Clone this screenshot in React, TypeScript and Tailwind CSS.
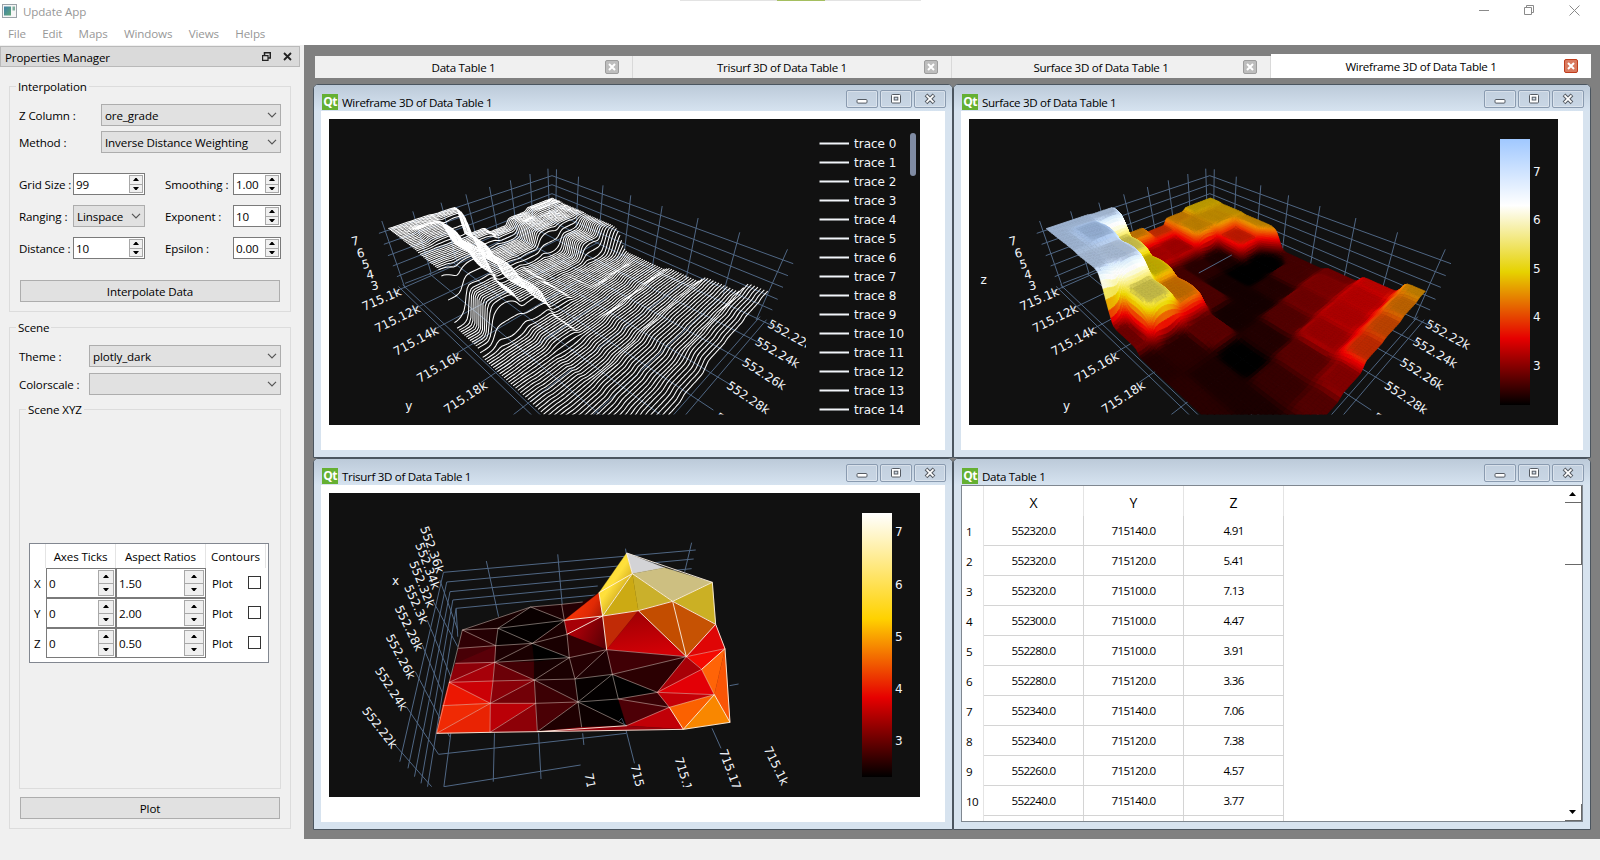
import React from "react";

type Pt = [number, number];

/* ---------- terrain model shared by the surface and wireframe plots ---------- */

// Node values on an 8 x 8 lattice; 0 marks a node without a sample.
const GRID_Z: number[][] = [
  [4.8, 4.7, 4.6, 0, 2.7, 3.0, 3.6, 4.55],
  [4.8, 4.65, 3.77, 2.2, 2.7, 3.1, 3.5, 4.35],
  [4.5, 4.57, 2.4, 2.2, 2.45, 3.0, 3.45, 4.1],
  [3.91, 3.36, 2.5, 2.35, 2.35, 2.8, 3.3, 3.9],
  [4.47, 3.4, 2.7, 2.75, 2.35, 2.45, 2.85, 3.15],
  [7.13, 5.41, 4.91, 4.4, 2.85, 2.2, 2.6, 2.8],
  [7.2, 7.38, 7.06, 5.4, 2.5, 2.4, 2.4, 2.5],
  [7.2, 7.2, 7.1, 3.0, 2.45, 2.5, 2.5, 2.5],
];

function height(x: number, y: number): number {
  let sw = 0;
  let sz = 0;
  for (let i = 0; i < 8; i++) {
    if (Math.abs(x - i) > 2.2) continue;
    for (let j = 0; j < 8; j++) {
      if (!GRID_Z[i][j]) continue;
      const d2 = (x - i) * (x - i) + (y - j) * (y - j) + 0.001;
      const w = Math.pow(d2, -4);
      sw += w;
      sz += w * GRID_Z[i][j];
    }
  }
  return sz / sw;
}

function project(x: number, y: number, z: number): Pt {
  const pz = 0.088 * (z - 7);
  const w = 1 - 0.0366 * x - 0.0491 * y - 0.171 * pz;
  return [
    259.6 + (-18.8 + 22.17 * y - 16.63 * x) / w,
    159 - (102 - 9.6 * x - 12.8 * y + 100 * pz) / w,
  ];
}

const fmt = (p: Pt) => `${p[0].toFixed(1)} ${p[1].toFixed(1)}`;

const STOPS: [number, number[]][] = [
  [0, [0, 0, 0]],
  [0.25, [230, 0, 0]],
  [0.5, [230, 210, 0]],
  [0.75, [255, 255, 255]],
  [1, [160, 200, 255]],
];

function colorFor(z: number, shade: number): string {
  const t = Math.min(1, Math.max(0, (z - 2.2) / 5.47));
  let k = 0;
  while (k < 3 && t > STOPS[k + 1][0]) k++;
  const f = (t - STOPS[k][0]) / 0.25;
  const c = STOPS[k][1].map((v, i) =>
    Math.min(255, Math.round((v + (STOPS[k + 1][1][i] - v) * f) * shade)),
  );
  return `rgb(${c[0]},${c[1]},${c[2]})`;
}

const N = 70;
const surfaceCells = (() => {
  const out: { d: string; c: string }[] = [];
  const patch = (x: number, y: number, s: number, depth: number) => {
    const a = height(x, y);
    const b = height(x + s, y);
    const c = height(x + s, y + s);
    const d = height(x, y + s);
    const range = Math.max(a, b, c, d) - Math.min(a, b, c, d);
    if (depth < 2 && range > 0.22) {
      const q = s / 2;
      patch(x, y, q, depth + 1);
      patch(x + q, y, q, depth + 1);
      patch(x, y + q, q, depth + 1);
      patch(x + q, y + q, q, depth + 1);
      return;
    }
    const p = [project(x, y, a), project(x + s, y, b), project(x + s, y + s, c), project(x, y + s, d)];
    if (Math.min(p[0][1], p[2][1]) > 300) return;
    const gx = (b - a + c - d) / (2 * s);
    const gy = (d - a + c - b) / (2 * s);
    const slope = Math.hypot(gx, gy);
    out.push({
      d: `M${p.map(fmt).join("L")}Z`,
      c: colorFor((a + b + c + d) / 4, 0.81 + 0.23 * Math.min(1, slope / 2.5)),
    });
  };
  const s = 7 / N;
  for (let i = 0; i < N; i++) {
    for (let j = 0; j < N; j++) patch(i * s, j * s, s, 0);
  }
  return out;
})();

const wirePath = (() => {
  let d = "";
  for (let j = 0; j < 99; j++) {
    const y = (j * 7) / 98;
    for (let i = 0; i <= 98; i++) {
      const x = 7 - (i * 7) / 98;
      d += (i ? "L" : "M") + fmt(project(x, y, height(x, y)));
    }
  }
  return d;
})();

const floorPath = (() => {
  let d = "";
  for (let k = 0; k < 8; k++) {
    d += `M${fmt(project(7.45, k, 2.2))}L${fmt(project(-0.15, k, 2.2))}`;
    d += `M${fmt(project(k, 7.45, 2.2))}L${fmt(project(k, -0.15, 2.2))}`;
  }
  d += `M${fmt(project(7.15, -0.15, 2.2))}L${fmt(project(7.15, 7.2, 2.2))}`;
  d += `M${fmt(project(-0.15, 7.15, 2.2))}L${fmt(project(7.2, 7.15, 2.2))}`;
  return d;
})();

const WALLS =
  "M188 370L612 197L1203 461M200 403L612 224L1190 497M210 437L612 251L1178 532M222 468L612 279L1165 568M232 500L612 305L1152 600" +
  "M195 333L252 535M271 304L316 490M340 278L380 460M401 253L434 420M459 231L483 395M510 211L527 375M558 192L566 350M602 176L606 325" +
  "M623 178L621 330M677 200L671 355M737 226L727 380M805 256L790 420M882 288L858 470M970 324L940 510M1072 367L1032 550M1189 418L1112 630" +
  "M252 520L316 490L612 320";

interface Lbl {
  t: string;
  x: number;
  y: number;
  r: number;
}

function Labels({ items }: { items: Lbl[] }) {
  return (
    <g fill="#f2f5fa" fontFamily='"DejaVu Sans", sans-serif' fontSize="12">
      {items.map((l, i) => (
        <text key={i} transform={`translate(${l.x} ${l.y}) rotate(${l.r})`}>
          {l.t}
        </text>
      ))}
    </g>
  );
}

const SCENE_LABELS: Lbl[] = [
  { t: "7", x: 41, y: 127, r: -12 },
  { t: "6", x: 46.5, y: 139, r: -12 },
  { t: "5", x: 51.5, y: 150, r: -12 },
  { t: "4", x: 56, y: 160.5, r: -12 },
  { t: "3", x: 60.5, y: 171.5, r: -12 },
  { t: "715.1k", x: 53, y: 192, r: -23 },
  { t: "715.12k", x: 66, y: 214, r: -26 },
  { t: "715.14k", x: 85, y: 237, r: -28 },
  { t: "715.16k", x: 108.5, y: 264, r: -30 },
  { t: "715.18k", x: 136, y: 295, r: -33 },
  { t: "y", x: 94, y: 291, r: 0 },
  { t: "552.22k", x: 455.5, y: 207.5, r: 29 },
  { t: "552.24k", x: 443, y: 225, r: 30 },
  { t: "552.26k", x: 430, y: 245.5, r: 32 },
  { t: "552.28k", x: 414.5, y: 268.5, r: 34 },
  { t: "5", x: 403, y: 300, r: 34 },
];

function WireframePlot() {
  return (
    <svg width="591" height="306" viewBox="0 0 591 306" className="block bg-[#111]">
      <defs>
        <clipPath id="wf">
          <rect x="0" y="0" width="477" height="295.5" />
        </clipPath>
      </defs>
      <g clipPath="url(#wf)">
        <g transform="translate(-17.8 0)">
          <g fill="none" stroke="#506784" strokeWidth="1">
            <path d={floorPath} />
            <path d={WALLS} transform="translate(-9 -9) scale(.40816 .33333)" vectorEffect="non-scaling-stroke" />
          </g>
          <path d={wirePath} fill="none" stroke="#ffffff" strokeWidth="1.05" strokeLinejoin="round" />
          <Labels items={SCENE_LABELS} />
        </g>
      </g>
      <g fill="#f2f5fa" fontFamily='"DejaVu Sans", sans-serif' fontSize="12">
        {Array.from({ length: 15 }, (_, i) => (
          <g key={i}>
            <rect x="490.5" y={23.5 + i * 19} width="29.5" height="2" />
            <text x="525" y={28.8 + i * 19}>
              trace {i}
            </text>
          </g>
        ))}
      </g>
      <rect x="581" y="14" width="6" height="43" rx="3" fill="#7f8ba3" />
    </svg>
  );
}

function ColorTicks({ x, ys }: { x: number; ys: number[] }) {
  return (
    <g fill="#f2f5fa" fontFamily='"DejaVu Sans", sans-serif' fontSize="12">
      {ys.map((y, i) => (
        <text key={i} x={x} y={y + 4.4}>
          {7 - i}
        </text>
      ))}
    </g>
  );
}

function SurfacePlot() {
  return (
    <svg width="589" height="306" viewBox="0 0 589 306" className="block bg-[#111]">
      <defs>
        <clipPath id="sf">
          <rect x="0" y="0" width="509" height="295.5" />
        </clipPath>
        <linearGradient id="bb" x1="0" y1="1" x2="0" y2="0">
          <stop offset="0" stopColor="#000" />
          <stop offset=".25" stopColor="#e60000" />
          <stop offset=".5" stopColor="#e6d200" />
          <stop offset=".75" stopColor="#fff" />
          <stop offset="1" stopColor="#a0c8ff" />
        </linearGradient>
      </defs>
      <g clipPath="url(#sf)">
        <g fill="none" stroke="#506784" strokeWidth="1">
          <path d={floorPath} />
          <path d={WALLS} transform="translate(-9 -9) scale(.40816 .33333)" vectorEffect="non-scaling-stroke" />
        </g>
        <g strokeWidth="0.7">
          {surfaceCells.map((c, i) => (
            <path key={i} d={c.d} fill={c.c} stroke={c.c} />
          ))}
        </g>
        <path d="M229.8 154L262.8 136" stroke="#506784" strokeWidth="1" />
        <Labels items={SCENE_LABELS} />
        <Labels items={[{ t: "z", x: 11.5, y: 164.5, r: 0 }]} />
      </g>
      <rect x="531" y="20" width="30" height="266" fill="url(#bb)" />
      <ColorTicks x={564} ys={[52.7, 100.7, 150, 197.7, 247]} />
    </svg>
  );
}

/* ---------- triangulated surface ---------- */

const V: Record<string, Pt> = {
  A: [97, 255], B: [302, 186], B2: [395, 178], B3: [458, 171], C: [204, 250], D: [403, 226],
  E: [590, 24], E2: [704, 68], F: [607, 86], G: [847, 112], H: [728, 169], I: [857, 238],
  J: [518, 213], K: [507, 143], L: [625, 197], M: [530, 314], N: [769, 335], O: [885, 311],
  P: [815, 373], Q: [853, 449], R: [900, 532], S: [760, 553], T: [718, 487], U: [682, 442],
  V: [547, 388], W: [565, 462], X: [590, 542], Y: [444, 471], Z: [435, 402], a: [418, 338],
  b: [411, 268], c: [307, 295], c2: [313, 350], d: [197, 302], e: [85, 310], f: [76, 355],
  g: [194, 352], h: [313, 405], i: [189, 408], j: [57, 412], k: [181, 475], l: [38, 482],
  m: [20, 565], n: [180, 562], o: [317, 475], p: [322, 560], q: [455, 547],
};

const FACES: [string, string][] = [
  ["A B C", "#190001"], ["B D C", "#0a0000"], ["B B2 D", "#1c0002"], ["B2 B3 K D", "#260003"],
  ["A C d", "#240003"], ["A d e", "#300004"], ["C d c", "#080000"], ["C D c", "#030000"],
  ["d c g", "#1c0002"], ["e d f", "#480006"], ["d g f", "#5a0008"], ["D b c", "#1b0001"],
  ["b a c", "#190001"], ["g c c2", "#1a0001"], ["c a c2", "#000000"], ["g c2 h", "#420005"],
  ["c2 a h", "#170001"], ["f g j", "#8e0009"], ["g i j", "#a60009"], ["g i h", "#6b0007"],
  ["j i k", "#cb0006"], ["i h k", "#8a0008"], ["j k l", "#ec1702"], ["l k m", "#f02a04"],
  ["m k n", "#e92303"], ["k h o", "#720007"], ["k o n", "#ba0007"], ["o n p", "#8d0007"],
  ["h o Y", "#3c0004"], ["o Y p", "#4a0005"], ["h a Z", "#1a0001"], ["h Z Y", "#250003"],
  ["Y p q", "#1f0001"], ["a M Z", "#240002"], ["M V Z", "#1c0002"], ["Z V Y", "#060000"],
  ["V Y W", "#030000"], ["V U W", "#000000"], ["Y W X", "#000000"], ["Y X q", "#0d0000"],
  ["W U T", "#380004"], ["W T X", "#4d0006"], ["X T S", "#c10007"], ["p q X S", "#96000a"],
  ["b J M", "url(#t2)"], ["b M a", "#320003"], ["D J b", "#a70007"], ["D K J", "url(#t3)"],
  ["K E F J", "url(#t1)"], ["E E2 F", "#d3d3d6"], ["F E2 G H", "#cdbf81"], ["F H L", "#cab02b"],
  ["F L J", "#ccaa13"], ["H G I", "#cbb024"], ["J L M", "#c12b06"], ["L N M", "url(#t4)"],
  ["L H N", "#c34d00"], ["H N I", "#c65203"], ["M N V", "#400005"], ["N V U", "#2b0002"],
  ["N I O", "#df0606"], ["N O P", "#f40a02"], ["N P U", "#a80007"], ["P U Q", "#e30006"],
  ["U Q T", "#c50007"], ["P O Q", "#ff6407"], ["O R Q", "#fa5505"], ["T Q S", "#fb6100"],
  ["Q R S", "#f98700"],
];

const THIN =
  "A-d A-B C-B B-D A-C C-D C-d C-c c-D d-e d-c d-g g-f g-c a-c g-a g-h g-j j-i i-h g-i j-k i-k h-k k-l k-m k-n k-o o-n o-p h-o o-Y h-Y h-Z h-a a-Z a-M Z-M Z-V Z-Y Y-V Y-W Y-X Y-q Y-p V-U V-N V-M a-b D-b b-c W-V W-U W-T T-X T-U U-N U-P U-Q Q-T P-N N-O P-Q B-B2 B2-B3 B2-D M-N A-m".split(
    " ",
  );
const BOLD =
  "D-J b-J K-J J-F K-F E-F F-H H-G H-I E-G G-I I-O O-R I-N H-N J-M J-L L-H L-N R-S Q-S P-O Q-R S-T m-n n-p p-S p-X".split(" ");

const seg = (s: string) => {
  const [u, v] = s.split("-");
  return `M${V[u].join(" ")}L${V[v].join(" ")}`;
};

const TRI_GRID =
  "M327 367L945 300M335 396L940 327M343 425L935 356M350 450L705 408M358 475L700 435M432 333L462 500M607 313L618 465M773 296L776 320M935 278L918 365" +
  "M327 367L220 935M335 396L240 955M343 425L256 980M350 450L272 1000M358 475L288 1010M358 475L362 560" +
  "M315 913L775 850M328 1010L663 945M345 850L328 1010M452 850L449 995M560 850L566 987M668 850L671 885M773 835L795 940M985 835L1007 895M1028 707L1050 702" +
  "M205 880L298 1010M236 770L315 913M258 665L342 860M275 585L325 730M287 510L345 680M300 450L362 590M318 390L362 540";

const TRI_LABELS: Lbl[] = [
  { t: "552.36k", x: 91, y: 35, r: 70 },
  { t: "552.34k", x: 86, y: 51.5, r: 69 },
  { t: "552.32k", x: 80, y: 70, r: 68 },
  { t: "552.3k", x: 75, y: 94, r: 66 },
  { t: "552.28k", x: 65.5, y: 115, r: 64 },
  { t: "552.26k", x: 56.5, y: 144, r: 62 },
  { t: "552.24k", x: 45.5, y: 177.5, r: 57 },
  { t: "552.22k", x: 32.5, y: 218, r: 52 },
  { t: "x", x: 63, y: 91.5, r: 0 },
  { t: "71", x: 255.5, y: 281, r: 79 },
  { t: "715", x: 301.5, y: 272.5, r: 76 },
  { t: "715.1", x: 345.5, y: 265.5, r: 73 },
  { t: "715.17", x: 390, y: 258, r: 70 },
  { t: "715.1k", x: 434.5, y: 256, r: 64 },
];

function TrisurfPlot() {
  return (
    <svg width="591" height="304" viewBox="0 0 591 304" className="block bg-[#111]">
      <defs>
        <clipPath id="tf">
          <rect x="0" y="0" width="509" height="294" />
        </clipPath>
        <linearGradient id="hot" x1="0" y1="1" x2="0" y2="0">
          <stop offset="0" stopColor="#000" />
          <stop offset=".3" stopColor="#e60000" />
          <stop offset=".6" stopColor="#ffd200" />
          <stop offset="1" stopColor="#fff" />
        </linearGradient>
        <linearGradient id="t1" gradientUnits="userSpaceOnUse" x1="520" y1="110" x2="580" y2="150">
          <stop offset="0" stopColor="#ffdf35" />
          <stop offset=".35" stopColor="#ffe03c" />
          <stop offset="1" stopColor="#d0a91c" />
        </linearGradient>
        <linearGradient id="t2" gradientUnits="userSpaceOnUse" x1="440" y1="250" x2="530" y2="290">
          <stop offset="0" stopColor="#a80008" />
          <stop offset="1" stopColor="#5a0005" />
        </linearGradient>
        <linearGradient id="t3" gradientUnits="userSpaceOnUse" x1="440" y1="175" x2="520" y2="220">
          <stop offset="0" stopColor="#f53306" />
          <stop offset=".5" stopColor="#e02a05" />
          <stop offset="1" stopColor="#a01503" />
        </linearGradient>
        <linearGradient id="t4" gradientUnits="userSpaceOnUse" x1="620" y1="210" x2="640" y2="330">
          <stop offset="0" stopColor="#a30004" />
          <stop offset="1" stopColor="#d20006" />
        </linearGradient>
      </defs>
      <g clipPath="url(#tf)">
        <g transform="translate(-19 -43) scale(.40816 .33333)" fill="none" stroke="#506784">
          <path d={TRI_GRID} strokeWidth="1" vectorEffect="non-scaling-stroke" />
        </g>
        <g transform="translate(101 52) scale(.33333)">
          {FACES.map(([k, c]) => (
            <path
              key={k}
              d={`M${k.split(" ").map((n) => V[n].join(" ")).join("L")}Z`}
              fill={c}
              stroke={c}
              strokeWidth="1"
            />
          ))}
          <path d={THIN.map(seg).join("")} fill="none" stroke="#ffe9e0" strokeOpacity=".65" strokeWidth="2" />
          <path d={BOLD.map(seg).join("")} fill="none" stroke="#fff3e4" strokeOpacity=".9" strokeWidth="3" />
          <path d="M565 530L575 520L585 542" fill="none" stroke="#506784" strokeWidth="2" />
        </g>
        <Labels items={TRI_LABELS} />
      </g>
      <rect x="533" y="20" width="30" height="264" fill="url(#hot)" />
      <ColorTicks x={566} ys={[38.7, 91.3, 143.7, 195.7, 247.7]} />
    </svg>
  );
}

/* ---------- widgets ---------- */

function Combo({ text, cls }: { text: string; cls: string }) {
  return (
    <div className={`flex h-[22px] items-center justify-between border border-[#adadad] bg-[#e1e1e1] pr-[3px] pl-[3px] ${cls}`}>
      <span className="whitespace-pre">{text}</span>
      <svg width="10" height="6" viewBox="0 0 10 6">
        <path d="M1 .8L5 4.8L9 .8" fill="none" stroke="#555" strokeWidth="1.2" />
      </svg>
    </div>
  );
}

function Spin({ text, cls, btn }: { text: string; cls: string; btn: string }) {
  return (
    <div className={`flex items-stretch justify-between border border-[#7a7a7a] bg-white p-px pl-[2px] ${cls}`}>
      <span className="self-center">{text}</span>
      <div className={`flex flex-col border border-[#a8a8a8] bg-[#f0f0f0] ${btn}`}>
        <div className="flex flex-1 items-center justify-center border-b border-[#a8a8a8]">
          <svg width="6" height="3" viewBox="0 0 6 3">
            <path d="M0 3L2.4 0H3.6L6 3Z" />
          </svg>
        </div>
        <div className="flex flex-1 items-center justify-center">
          <svg width="6" height="3" viewBox="0 0 6 3">
            <path d="M0 0L2.4 3H3.6L6 0Z" />
          </svg>
        </div>
      </div>
    </div>
  );
}

function Group({ title, cls, children }: { title: string; cls: string; children: React.ReactNode }) {
  return (
    <fieldset className={`relative min-w-0 border border-[#dcdcdc] ${cls}`}>
      <span className="absolute -top-[11px] left-[6px] bg-[#f0f0f0] px-[2px] leading-[18px]">{title}</span>
      {children}
    </fieldset>
  );
}

function SubWindow({ title, children, cls }: { title: string; children: React.ReactNode; cls: string }) {
  const btn = "flex h-[18px] w-[32px] items-center justify-center rounded-[2px] border border-[#8a9bb0] bg-[#c3d1e0]/60 shadow-[inset_0_0_0_1px_rgba(255,255,255,.35)]";
  return (
    <section className={`flex flex-col rounded-t-[5px] border border-[#4b555f] bg-[#d7e3ef] px-[7px] pb-[7px] ${cls}`}>
      <header className="-mx-[7px] flex h-[26px] shrink-0 justify-between rounded-t-[4px] bg-linear-to-b from-[#bccad9] to-[#d6e3f0] pr-[6px] pl-[8px]">
        <div className="flex items-center gap-[4px] pt-[8px]">
          <span className="flex h-[16px] w-[16px] items-center justify-center bg-[#65b032] font-['Open_Sans','Noto_Sans',sans-serif] text-[12px] leading-none font-bold tracking-[-0.6px] text-white">
            Qt
          </span>
          <span className="pt-[2px] tracking-[-0.33px] whitespace-pre">{title}</span>
        </div>
        <div className="flex gap-[2px] pt-[5px]">
          <span className={btn}>
            <svg width="12" height="12" viewBox="0 0 12 12">
              <rect x="1" y="6.5" width="10" height="3.6" rx="1" fill="#fff" stroke="#555b63" />
            </svg>
          </span>
          <span className={btn}>
            <svg width="12" height="12" viewBox="0 0 12 12">
              <rect x="1.5" y="1.5" width="9" height="8.5" rx="1" fill="#fff" stroke="#555b63" />
              <rect x="4.2" y="4.2" width="3.6" height="2.8" fill="#cfdae6" stroke="#555b63" />
            </svg>
          </span>
          <span className={btn}>
            <svg width="12" height="12" viewBox="0 0 12 12">
              <path d="M2 1.8L10 9.8M10 1.8L2 9.8" stroke="#555b63" strokeWidth="3.8" />
              <path d="M2.5 2.3L9.5 9.3M9.5 2.3L2.5 9.3" stroke="#fff" strokeWidth="1.8" />
            </svg>
          </span>
        </div>
      </header>
      {children}
    </section>
  );
}

function Tab({ title, active, cls }: { title: string; active?: boolean; cls: string }) {
  return (
    <div className={`flex items-center ${active ? "h-[24px] bg-white pb-[1px]" : "h-[22px] self-end border-r border-[#d9d9d9] bg-[#f0f0f0]"} ${cls}`}>
      <span className="flex-1 pt-[2px] pl-[7px] text-center tracking-[-0.3px]">{title}</span>
      <span className={`mr-[13px] flex h-[14px] w-[14px] items-center justify-center rounded-[2px] border ${active ? "border-[#c03c1c] bg-[#d97a5f]" : "border-[#9c9c9c] bg-[#bdbdbd]"}`}>
        <svg width="8" height="8" viewBox="0 0 8 8">
          <path d="M1 1L7 7M7 1L1 7" stroke="#fff" strokeWidth="2" />
        </svg>
      </span>
    </div>
  );
}

const ROWS: string[][] = [
  ["552320.0", "715140.0", "4.91"],
  ["552320.0", "715120.0", "5.41"],
  ["552320.0", "715100.0", "7.13"],
  ["552300.0", "715100.0", "4.47"],
  ["552280.0", "715100.0", "3.91"],
  ["552280.0", "715120.0", "3.36"],
  ["552340.0", "715140.0", "7.06"],
  ["552340.0", "715120.0", "7.38"],
  ["552260.0", "715120.0", "4.57"],
  ["552240.0", "715140.0", "3.77"],
  ["", "", ""],
];

function DataTable() {
  return (
    <div className="flex flex-1 justify-between overflow-hidden border border-[#7f8790] bg-white">
      <div className="h-[336px] overflow-hidden">
        <div className="flex h-[30px] text-[14px]">
          <div className="w-[22px] border-r border-[#e4e4e4]" />
          {["X", "Y", "Z"].map((c) => (
            <div key={c} className="flex w-[100px] items-center justify-center border-r border-[#e4e4e4] pt-[3px]">
              {c}
            </div>
          ))}
        </div>
        {ROWS.map((r, i) => (
          <div key={i} className="flex h-[30px] tracking-[-0.68px]">
            <div className="flex w-[22px] items-center border-r border-[#e4e4e4] pt-px pl-[4px]">{r[0] && i + 1}</div>
            {r.map((v, k) => (
              <div key={k} className="flex w-[100px] items-center justify-center border-r border-b border-[#d4d4d4]">
                {v}
              </div>
            ))}
          </div>
        ))}
      </div>
      <div className="flex w-[17px] flex-col">
        <div className="flex h-[17px] items-center justify-center border-r border-b border-[#696969] pr-[2px]">
          <svg width="7" height="4" viewBox="0 0 7 4">
            <path d="M0 4L3.5 0L7 4Z" />
          </svg>
        </div>
        <div className="h-[62px] border-r border-b border-[#696969]" />
        <div className="flex-1" />
        <div className="flex h-[17px] items-center justify-center border-r border-b border-[#696969] pr-[2px]">
          <svg width="7" height="4" viewBox="0 0 7 4">
            <path d="M0 0L3.5 4L7 0Z" />
          </svg>
        </div>
      </div>
    </div>
  );
}

const AXES: string[][] = [
  ["X", "1.50"],
  ["Y", "2.00"],
  ["Z", "0.50"],
];

function PropertiesPanel() {
  return (
    <aside className="flex w-[304px] flex-col bg-[#f0f0f0] pt-px tracking-[-0.12px] [&_span]:pt-[2px]">
      <div className="flex h-[21px] w-[300px] items-center justify-between border border-[#b9b9b9] bg-[#dadada] pr-[7px] pl-[4px]">
        <span>Properties Manager</span>
        <div className="flex gap-[12px]">
          <svg width="9" height="9" viewBox="0 0 9 9" fill="none" stroke="#222">
            <path d="M2.5 3V.8H8.3V6H6" strokeWidth="1.5" />
            <path d="M.6 3.6H6V8.3H.6Z" strokeWidth="1.2" />
          </svg>
          <svg width="9" height="9" viewBox="0 0 9 9">
            <path d="M1 1L8 8M8 1L1 8" stroke="#222" strokeWidth="1.8" />
          </svg>
        </div>
      </div>

      <Group title="Interpolation" cls="mt-[19px] ml-[9px] h-[226px] w-[282px] px-[9px] pt-[17px]">
        <div className="flex items-center">
          <span className="w-[82px]">Z Column :</span>
          <Combo text="ore_grade" cls="w-[180px]" />
        </div>
        <div className="mt-[5px] flex items-center">
          <span className="w-[82px]">Method :</span>
          <Combo text="Inverse Distance Weighting" cls="w-[180px]" />
        </div>
        <div className="mt-[20px] flex flex-col gap-[10px]">
          <div className="flex items-center">
            <span className="w-[54px] whitespace-pre">Grid Size :</span>
            <Spin text="99" cls="h-[22px] w-[72px]" btn="w-[14px]" />
            <span className="ml-[20px] w-[68px] whitespace-pre">Smoothing :</span>
            <Spin text="1.00" cls="h-[22px] w-[48px]" btn="w-[14px]" />
          </div>
          <div className="flex items-center">
            <span className="w-[54px] whitespace-pre">Ranging :</span>
            <Combo text="Linspace" cls="w-[72px]" />
            <span className="ml-[20px] w-[68px] whitespace-pre">Exponent :</span>
            <Spin text="10" cls="h-[22px] w-[48px]" btn="w-[14px]" />
          </div>
          <div className="flex items-center">
            <span className="w-[54px] whitespace-pre">Distance :</span>
            <Spin text="10" cls="h-[22px] w-[72px]" btn="w-[14px]" />
            <span className="ml-[20px] w-[68px] whitespace-pre">Epsilon :</span>
            <Spin text="0.00" cls="h-[22px] w-[48px]" btn="w-[14px]" />
          </div>
        </div>
        <div className="mt-[21px] ml-px flex h-[22px] w-[260px] items-center justify-center border border-[#adadad] bg-[#e1e1e1] pt-[2px]">
          Interpolate Data
        </div>
      </Group>

      <Group title="Scene" cls="mt-[15px] ml-[9px] h-[502px] w-[282px] px-[9px] pt-[17px]">
        <div className="flex items-center">
          <span className="w-[70px]">Theme :</span>
          <Combo text="plotly_dark" cls="w-[192px]" />
        </div>
        <div className="mt-[6px] flex items-center">
          <span className="w-[70px]">Colorscale :</span>
          <Combo text="" cls="w-[192px]" />
        </div>
        <Group title="Scene XYZ" cls="mt-[14px] flex h-[380px] w-[262px] flex-col px-[9px] pt-[133px]">
          <div className="h-[120px] w-[240px] border border-[#828790] bg-white">
            <div className="flex h-[24px] items-center text-center">
              <span className="h-full w-[16px] border-r border-[#e4e4e4]" />
              <span className="flex h-full w-[70px] items-center justify-center border-r border-[#e4e4e4]">Axes Ticks</span>
              <span className="flex h-full w-[90px] items-center justify-center border-r border-[#e4e4e4]">Aspect Ratios</span>
              <span className="flex h-full w-[60px] items-center justify-center border-r border-[#e4e4e4]">Contours</span>
            </div>
            {AXES.map(([a, v]) => (
              <div key={a} className="flex h-[30px] items-center">
                <span className="w-[16px] pl-[4px]">{a}</span>
                <Spin text="0" cls="h-[30px] w-[70px]" btn="w-[16px]" />
                <Spin text={v} cls="h-[30px] w-[90px]" btn="w-[20px]" />
                <span className="w-[42px] pl-[6px]">Plot</span>
                <div className="mb-[2px] h-[13px] w-[13px] border border-[#333] bg-white" />
              </div>
            ))}
          </div>
        </Group>
        <div className="mt-[8px] ml-px flex h-[22px] w-[260px] items-center justify-center border border-[#adadad] bg-[#e1e1e1] pt-[2px]">
          Plot
        </div>
      </Group>
    </aside>
  );
}

export default function App() {
  return (
    <div className="flex h-[860px] w-[1600px] flex-col overflow-hidden bg-[#f0f0f0] font-['Open_Sans','Noto_Sans',sans-serif] text-[11.6px] leading-[16px] text-black">
      <div className="flex h-[45px] flex-col bg-white text-[#979797]">
        <div className="relative flex h-[22px] items-center justify-between pl-[2px]">
          <div className="absolute top-0 left-[680px] flex h-px w-[241px] justify-center bg-[#e3e3e3]">
            <div className="h-px w-[48px] bg-[#a5bf60]" />
          </div>
          <div className="flex items-center gap-[6px]">
            <svg width="15" height="14" viewBox="0 0 15 14">
              <defs>
                <linearGradient id="ic" x1="0" y1="0" x2="1" y2="1">
                  <stop offset="0" stopColor="#3e7fa8" />
                  <stop offset="1" stopColor="#5fa777" />
                </linearGradient>
              </defs>
              <rect x=".5" y=".5" width="14" height="13" fill="#f6f6f6" stroke="#9aa2a8" />
              <rect x="2" y="2.5" width="7" height="9" fill="url(#ic)" />
              <rect x="10.5" y="2.5" width="2.5" height="4" fill="#7fae9d" />
            </svg>
            <span className="pt-[2px] tracking-[-0.1px]">Update App</span>
          </div>
          <div className="flex items-center gap-[35px] pr-[20px] pb-[2px]">
            <svg width="10" height="10" viewBox="0 0 10 10">
              <path d="M0 5.5H10" stroke="#8a8a8a" />
            </svg>
            <svg width="10" height="10" viewBox="0 0 10 10" fill="none" stroke="#8a8a8a">
              <path d="M.5 2.5H7.5V9.5H.5ZM2.5 2.5V.5H9.5V7.5H7.5" />
            </svg>
            <svg width="11" height="11" viewBox="0 0 11 11">
              <path d="M.5 .5L10.5 10.5M10.5 .5L.5 10.5" stroke="#8a8a8a" />
            </svg>
          </div>
        </div>
        <nav className="flex h-[23px] items-center gap-[16.3px] pl-[8px] tracking-[-0.12px]">
          {["File", "Edit", "Maps", "Windows", "Views", "Helps"].map((m) => (
            <span key={m}>{m}</span>
          ))}
        </nav>
      </div>

      <div className="flex h-[794px]">
        <PropertiesPanel />
        <main className="flex flex-1 flex-col bg-[#808080] pt-[9px] pl-[9px]">
          <div className="ml-[2px] flex h-[24px]">
            <Tab title="Data Table 1" cls="w-[318px]" />
            <Tab title="Trisurf 3D of Data Table 1" cls="w-[319px]" />
            <Tab title="Surface 3D of Data Table 1" cls="w-[319px]" />
            <Tab title="Wireframe 3D of Data Table 1" active cls="w-[320px]" />
          </div>
          <div className="mt-[6px] grid h-[746px] grid-cols-[640px_638px] grid-rows-[374px_372px]">
            <SubWindow title="Wireframe 3D of Data Table 1" cls="h-[374px]">
              <div className="flex-1 bg-white pt-[8px] pl-[8px]">
                <WireframePlot />
              </div>
            </SubWindow>
            <SubWindow title="Surface 3D of Data Table 1" cls="h-[374px]">
              <div className="flex-1 bg-white pt-[8px] pl-[8px]">
                <SurfacePlot />
              </div>
            </SubWindow>
            <SubWindow title="Trisurf 3D of Data Table 1" cls="h-[372px]">
              <div className="flex-1 bg-white pt-[8px] pl-[8px]">
                <TrisurfPlot />
              </div>
            </SubWindow>
            <SubWindow title="Data Table 1" cls="h-[372px]">
              <DataTable />
            </SubWindow>
          </div>
        </main>
      </div>
    </div>
  );
}
